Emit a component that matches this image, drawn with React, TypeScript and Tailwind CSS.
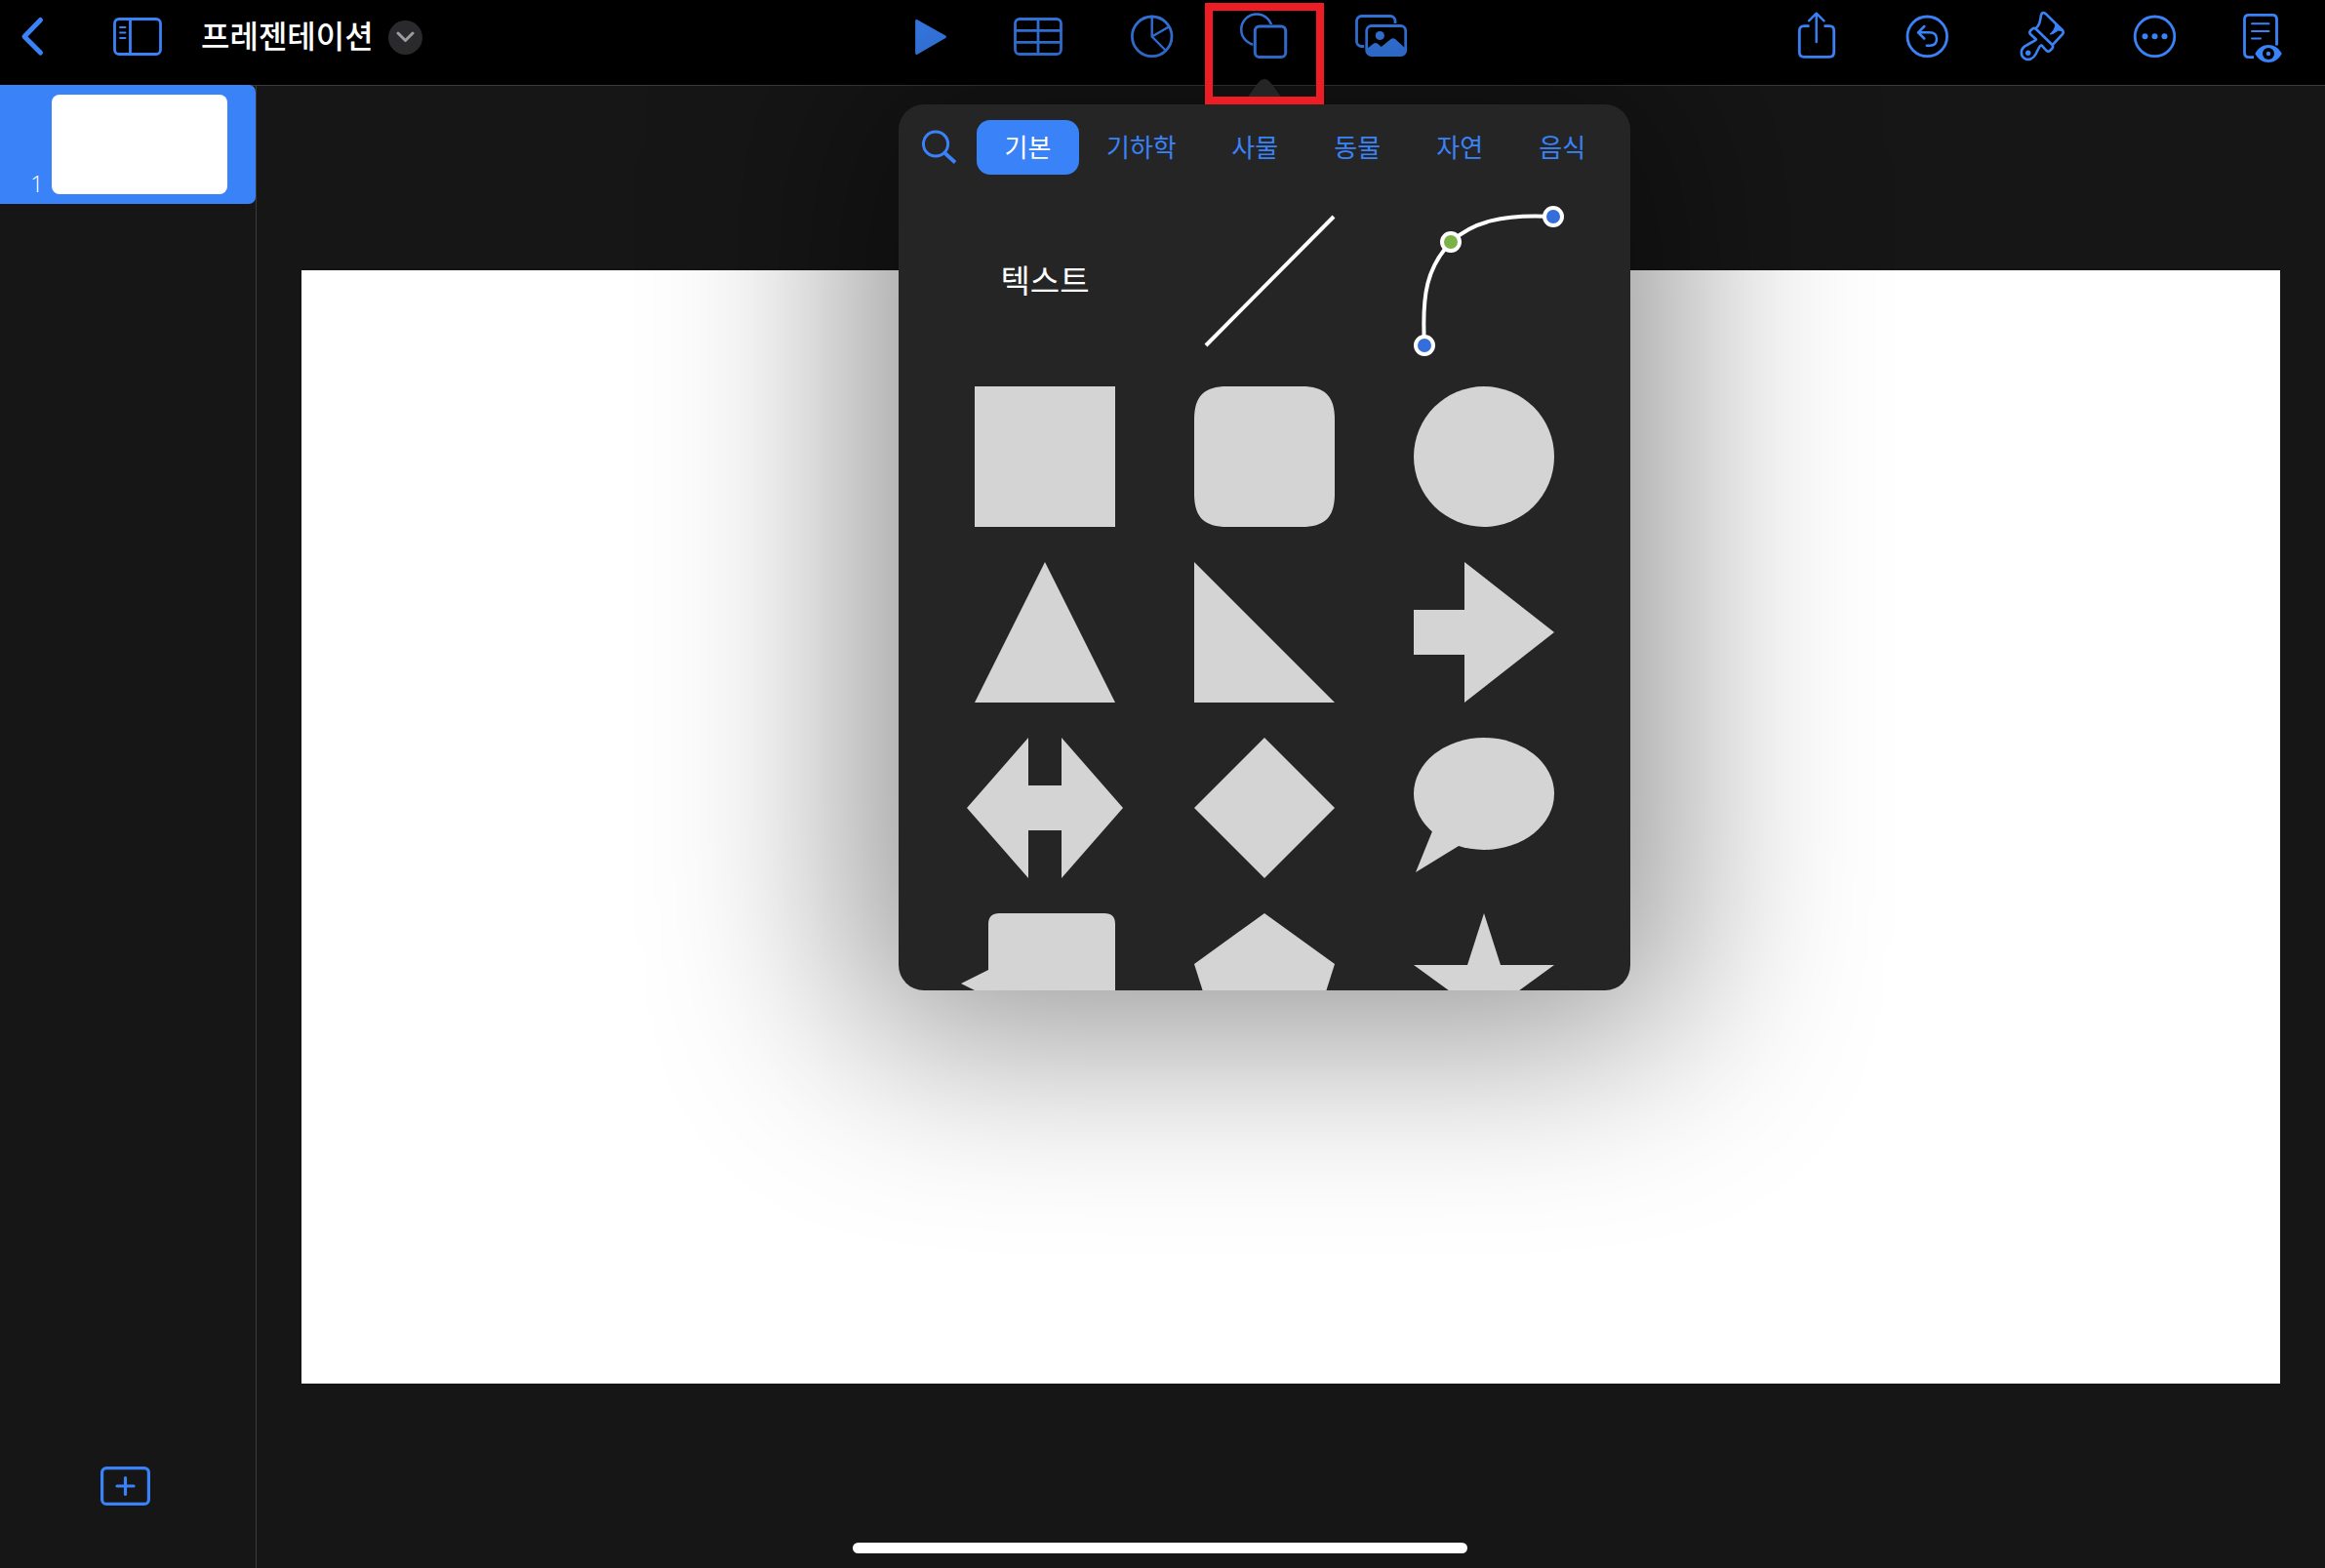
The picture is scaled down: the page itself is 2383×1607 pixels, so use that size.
import type { ReactNode } from "react";

function Icon({ width, children }: { width: number; children: ReactNode }) {
  return (
    <svg
      aria-hidden="true"
      width={width}
      height={56}
      viewBox={`0 0 ${width} 56`}
      fill="none"
      stroke="currentColor"
      strokeWidth={2.8}
      strokeLinecap="round"
      strokeLinejoin="round"
      className="block overflow-visible"
    >
      {children}
    </svg>
  );
}

function ToolButton({ label, children }: { label: string; children: ReactNode }) {
  return (
    <button type="button" aria-label={label} className="block shrink-0">
      {children}
    </button>
  );
}

function Shape({ label, children }: { label: string; children: ReactNode }) {
  return (
    <button type="button" aria-label={label} className="block size-36">
      <svg aria-hidden="true" viewBox="0 0 144 144" className="block size-36 overflow-visible fill-[#d4d4d4]">
        {children}
      </svg>
    </button>
  );
}

const tabs = ["기본", "기하학", "사물", "동물", "자연", "음식"];

function ShapesPopover() {
  return (
    <div
      role="dialog"
      aria-label="도형"
      className="absolute top-[97px] left-1/2 z-10 h-[908px] w-[750px] -translate-x-1/2 rounded-[26px] bg-[#252525] shadow-[0_0_200px_50px_rgba(0,0,0,0.41)]"
    >
      <svg aria-hidden="true" width="64" height="27" viewBox="0 0 64 27" className="absolute -top-[26px] left-1/2 -translate-x-1/2 fill-[#252525]">
        <path d="M7 27C12 23 16 17 21 10C25 4 28 0 32 0C36 0 39 4 43 10C48 17 52 23 57 27Z" />
      </svg>
      <div className="flex h-full flex-col overflow-hidden rounded-[26px]">
        <div className="flex items-center gap-5 pt-4 pl-6">
          <button type="button" aria-label="검색" className="block text-[#3a82f7]">
            <svg aria-hidden="true" width="36" height="36" viewBox="0 0 36 36" fill="none" stroke="currentColor" strokeWidth="3" className="block">
              <circle cx="14" cy="14.5" r="12.6" />
              <path d="M23 23.5L34 33.5" strokeWidth="3.8" />
            </svg>
          </button>
          <div role="tablist" className="flex">
            {tabs.map((tab, i) => (
              <button
                key={tab}
                type="button"
                role="tab"
                aria-selected={i === 0}
                className={
                  i === 0
                    ? "h-14 min-w-[105px] rounded-[14px] bg-[#3a82f7] px-7 pb-[2px] text-[26px] leading-8 text-white"
                    : "h-14 min-w-[105px] px-7 pb-[2px] text-[26px] leading-8 text-[#3a82f7]"
                }
              >
                {tab}
              </button>
            ))}
          </div>
        </div>
        <div className="grid grid-cols-[auto_auto_auto] justify-between gap-y-9 px-[78px] pt-[37px]">
          <button type="button" className="flex size-36 items-center justify-center pb-1 text-[33px] leading-10 text-white">
            텍스트
          </button>
          <Shape label="선">
            <path d="M12 138L143 6" stroke="#fff" strokeWidth="4" />
          </Shape>
          <Shape label="곡선">
            <path d="M11 138C8 84 14 58 38 32C60 12 90 3 143 6" fill="none" stroke="#fff" strokeWidth="4" />
            <circle cx="11" cy="138" r="9" fill="#346edb" stroke="#fff" strokeWidth="4" />
            <circle cx="38" cy="32" r="9" fill="#7cb246" stroke="#fff" strokeWidth="4" />
            <circle cx="143" cy="6" r="9" fill="#346edb" stroke="#fff" strokeWidth="4" />
          </Shape>
          <Shape label="사각형">
            <rect width="144" height="144" />
          </Shape>
          <Shape label="둥근 사각형">
            <path d="M34 0H110C134 0 144 10 144 34V110C144 134 134 144 110 144H34C10 144 0 134 0 110V34C0 10 10 0 34 0Z" />
          </Shape>
          <Shape label="원">
            <circle cx="72" cy="72" r="72" />
          </Shape>
          <Shape label="삼각형">
            <path d="M72 0L144 144H0Z" />
          </Shape>
          <Shape label="직각 삼각형">
            <path d="M0 0L144 144H0Z" />
          </Shape>
          <Shape label="화살표">
            <path d="M52 0L144 72L52 144V95H0V49H52Z" />
          </Shape>
          <Shape label="양방향 화살표">
            <path d="M55 0V49H89V0L152 72L89 144V95H55V144L-8 72Z" />
          </Shape>
          <Shape label="마름모">
            <path d="M72 0L144 72L72 144L0 72Z" />
          </Shape>
          <Shape label="말풍선">
            <ellipse cx="72" cy="57.5" rx="72" ry="57.5" />
            <path d="M19 96L2 138L46 111L60 90Z" />
          </Shape>
          <Shape label="사각 설명선">
            <path d="M25 0H133Q144 0 144 11V133Q144 144 133 144H25Q14 144 14 133V86L-14 72L14 58V11Q14 0 25 0Z" />
          </Shape>
          <Shape label="오각형">
            <path d="M72 0L144 52L117 137H27L0 52Z" />
          </Shape>
          <Shape label="별">
            <path d="M72 0L89 53H144L100 85L116 137L72 105L28 137L44 85L0 53H55Z" />
          </Shape>
        </div>
      </div>
    </div>
  );
}

function Toolbar() {
  return (
    <header className="grid h-[88px] grid-cols-[1fr_auto_1fr] items-start border-b border-[#3a3a3a] bg-black pt-[10px] pr-[25px] pl-[22px] text-[#3a82f7]">
      <div className="flex h-14 items-center">
        <ToolButton label="뒤로">
          <Icon width={24}>
            <path d="M19.5 10.5L3 27.5L19.5 44" strokeWidth={5} />
          </Icon>
        </ToolButton>
        <div className="ml-[70px] flex">
          <ToolButton label="사이드바">
            <Icon width={50}>
              <rect x="1.5" y="9.5" width="47" height="36" rx="4.5" />
              <path d="M17.5 9.5V45.5" />
              <path d="M7 18H12.5M7 23.5H12.5M7 29H12.5" strokeWidth={1.8} />
            </Icon>
          </ToolButton>
        </div>
        <h1 className="ml-10 pb-[6px] text-[32px] leading-10 font-medium text-white">프레젠테이션</h1>
        <button
          type="button"
          aria-label="문서 옵션"
          className="ml-[15px] flex size-[35px] items-center justify-center rounded-full bg-[#2a2a2c] text-[#9b9ba0]"
        >
          <svg aria-hidden="true" width="19" height="12" viewBox="0 0 19 12" fill="none" stroke="currentColor" strokeWidth="3" strokeLinecap="round" strokeLinejoin="round">
            <path d="M2 2L9.5 9.5L17 2" />
          </svg>
        </button>
      </div>

      <div className="flex gap-[69px]">
        <ToolButton label="재생">
          <Icon width={32}>
            <path d="M1.5 11.5L30.5 27.7L1.5 44.5Z" fill="currentColor" />
          </Icon>
        </ToolButton>
        <ToolButton label="표">
          <Icon width={50}>
            <rect x="1.5" y="9.5" width="47" height="36" rx="4.5" />
            <path d="M25 9.5V45.5M1.5 21.3H48.5M1.5 33.3H48.5" />
          </Icon>
        </ToolButton>
        <ToolButton label="차트">
          <Icon width={44}>
            <circle cx="22.7" cy="27.3" r="20.3" />
            <path d="M22.7 7V27.5L40 17.5M22.7 27.5L36.5 41.5" strokeWidth={2.4} />
          </Icon>
        </ToolButton>
        <div className="relative">
          <ToolButton label="도형">
            <Icon width={50}>
              <circle cx="17" cy="20.3" r="15.8" strokeWidth={2.5} />
              <rect x="15.3" y="17" width="31.4" height="31.4" rx="4.5" fill="#000" stroke="#000" strokeWidth={4} />
              <rect x="15.3" y="17" width="31.4" height="31.4" rx="4.5" strokeWidth={3} />
            </Icon>
          </ToolButton>
          <ShapesPopover />
          <div className="pointer-events-none absolute -top-[7px] left-1/2 z-20 h-[104px] w-[122px] -translate-x-1/2 border-8 border-[#ee1c25]" />
        </div>
        <ToolButton label="미디어">
          <Icon width={52}>
            <rect x="0.5" y="6.5" width="39.5" height="31" rx="5" />
            <rect x="10.7" y="16.5" width="40" height="30" rx="5" fill="#000" stroke="#000" strokeWidth={5} />
            <rect x="10.7" y="16.5" width="40" height="30" rx="5" />
            <circle cx="24.3" cy="26.5" r="4.6" fill="currentColor" stroke="none" />
            <path d="M11 40L18 34.5Q20 33.2 22 34.8L25.7 38L35.5 30Q37.7 28.6 40 30L50.5 39.5V43Q50.5 46.5 47 46.5H15Q11 46.5 11 43Z" fill="currentColor" stroke="none" />
          </Icon>
        </ToolButton>
      </div>

      <div className="flex justify-end gap-[68px] pr-[19px]">
        <ToolButton label="공유">
          <Icon width={44}>
            <path d="M13.5 16.7H8Q3.3 16.7 3.3 21.5V43.5Q3.3 48.3 8 48.3H34Q38.7 48.3 38.7 43.5V21.5Q38.7 16.7 34 16.7H28.5" strokeLinecap="butt" />
            <path d="M20.7 33V4M13 11.3L20.7 3.7L28.5 11.3" strokeWidth={2.4} />
          </Icon>
        </ToolButton>
        <ToolButton label="실행 취소">
          <Icon width={48}>
            <circle cx="22.3" cy="27.3" r="20.3" />
            <path d="M19.3 17L13 23.3L19.3 29.5M13.5 23.3H24.5C29.5 23.3 32 26 32 30C32 34 29.5 36.7 25 36.7H21.8" strokeWidth={2.5} />
          </Icon>
        </ToolButton>
        <ToolButton label="포맷">
          <Icon width={50}>
            <path d="M17.5 19C22.5 15.5 22 10 23 5.5C23.6 2.8 26 2.3 28 4.3L45 21Q46.5 23 45 25L35.3 35.3" strokeWidth={2.6} />
            <path d="M17.5 19.5L34.5 36Q35.8 38 34.3 39.8L32 42Q30.3 43.4 28.6 42L23.5 36.3Q21.5 37 20.5 39.5L17.5 45.5C15 50.5 10 52.2 6 49.8C1.5 47 2 40.5 6 37.6L14 33Q17.5 31.5 18 30.5L12 25Q10.6 23.2 12 21.5L14.3 19.5Q16 18.3 17.5 19.5Z" strokeWidth={2.6} />
            <path d="M37.5 13.5L44 21.5Q40.5 20 37.5 23Q35 25.2 32 25C34.5 23 38.5 18.5 37.5 13.5Z" fill="currentColor" strokeWidth={1} />
            <circle cx="9.7" cy="44.3" r="2.7" fill="currentColor" stroke="none" />
          </Icon>
        </ToolButton>
        <ToolButton label="더 보기">
          <Icon width={44}>
            <circle cx="21.5" cy="27.3" r="20.3" />
            <g fill="currentColor" stroke="none">
              <circle cx="11.5" cy="27.3" r="3" />
              <circle cx="21.5" cy="27.3" r="3" />
              <circle cx="31.5" cy="27.3" r="3" />
            </g>
          </Icon>
        </ToolButton>
        <ToolButton label="읽기 모드">
          <Icon width={40}>
            <path d="M11 48.7H6Q1.5 48.7 1.5 44V9.7Q1.5 5.3 6 5.3H30Q34.5 5.3 34.5 9.7V36.5" strokeLinecap="butt" />
            <path d="M9 14.3H26.5M9 22H26.5M9 29.5H18" strokeWidth={2} />
            <path d="M12.3 45C15.5 39 20.5 36 26 36C31.5 36 36.5 39 39.8 45C36.5 51 31.5 54 26 54C20.5 54 15.5 51 12.3 45Z" fill="currentColor" stroke="none" />
            <circle cx="26" cy="45" r="6" fill="#000" stroke="none" />
            <circle cx="26" cy="45" r="2.2" fill="currentColor" stroke="none" />
          </Icon>
        </ToolButton>
      </div>
    </header>
  );
}

export default function App() {
  return (
    <div className="relative flex min-h-screen flex-col overflow-hidden bg-[#161616] font-['Noto_Sans_CJK_KR',sans-serif]">
      <Toolbar />
      <div className="flex flex-1">
        <aside className="flex w-[263px] shrink-0 flex-col justify-between border-r border-[#3a3a3a]">
          <button type="button" aria-label="슬라이드 1" className="-mt-px flex items-end gap-3 rounded-r-[7px] bg-[#3a82f7] pt-[10px] pr-[29px] pb-[10px] pl-[31px]">
            <span className="w-[10px] text-center font-['Open_Sans',sans-serif] text-[24px] leading-[22px] font-light text-white">1</span>
            <span className="h-[102px] flex-1 rounded-lg bg-white" />
          </button>
          <button type="button" aria-label="슬라이드 추가" className="mb-16 ml-[103px] self-start text-[#3a82f7]">
            <svg aria-hidden="true" width="51" height="40" viewBox="0 0 51 40" fill="none" stroke="currentColor" strokeWidth="3.2" strokeLinecap="round" className="block">
              <rect x="1.6" y="1.6" width="47.8" height="36.8" rx="4.5" />
              <path d="M25.5 11.5V28.5M17 20H34" />
            </svg>
          </button>
        </aside>
        <main className="flex-1 px-[46px] pt-[189px]">
          <div className="aspect-video w-full bg-white" />
        </main>
      </div>
      <div className="pointer-events-none absolute inset-x-0 bottom-[15px] flex justify-center pr-[5px]">
        <div className="h-[11px] w-[630px] rounded-full bg-white" />
      </div>
    </div>
  );
}
